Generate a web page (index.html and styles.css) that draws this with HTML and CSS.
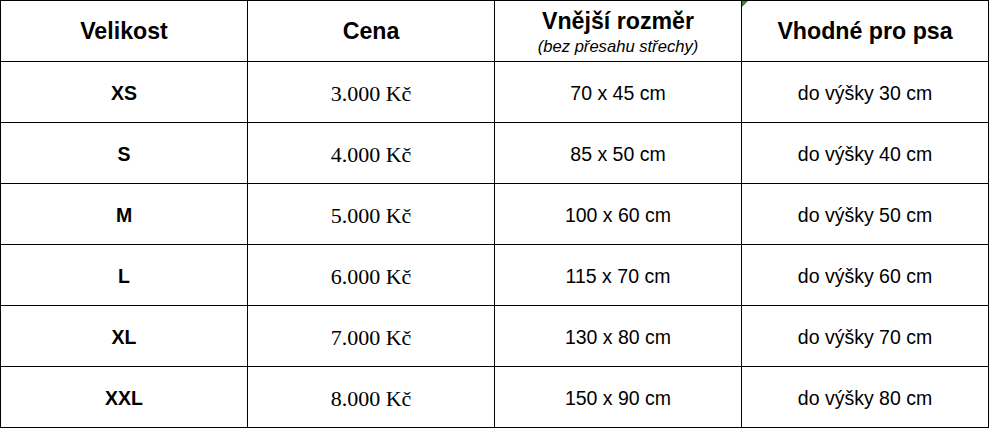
FILE: index.html
```html
<!DOCTYPE html>
<html lang="cs">
<head>
<meta charset="utf-8">
<title>Velikosti</title>
<link rel="stylesheet" href="styles.css">
</head>
<body>
<table class="sizes">
  <colgroup><col><col><col><col></colgroup>
  <thead>
    <tr>
      <th>Velikost</th>
      <th>Cena</th>
      <th class="two-line"><span class="main">Vnější rozměr</span><span class="sub">(bez přesahu střechy)</span></th>
      <th class="flagged"><span class="marker"></span>Vhodné pro psa</th>
    </tr>
  </thead>
  <tbody>
    <tr><td class="size">XS</td><td class="price">3.000 Kč</td><td>70 x 45 cm</td><td>do výšky 30 cm</td></tr>
    <tr><td class="size">S</td><td class="price">4.000 Kč</td><td>85 x 50 cm</td><td>do výšky 40 cm</td></tr>
    <tr><td class="size">M</td><td class="price">5.000 Kč</td><td>100 x 60 cm</td><td>do výšky 50 cm</td></tr>
    <tr><td class="size">L</td><td class="price">6.000 Kč</td><td>115 x 70 cm</td><td>do výšky 60 cm</td></tr>
    <tr><td class="size">XL</td><td class="price">7.000 Kč</td><td>130 x 80 cm</td><td>do výšky 70 cm</td></tr>
    <tr><td class="size">XXL</td><td class="price">8.000 Kč</td><td>150 x 90 cm</td><td>do výšky 80 cm</td></tr>
  </tbody>
</table>
</body>
</html>
```

FILE: styles.css
```css
html, body {
  margin: 0;
  padding: 0;
  background: #ffffff;
}

body {
  font-family: "Liberation Sans", Arial, sans-serif;
  color: #000000;
}

.sizes {
  table-layout: fixed;
  width: 989px;
  border-collapse: separate;
  border-spacing: 0;
  border-top: 1px solid #000;
  border-left: 1px solid #000;
}

.sizes col {
  width: 247px;
}

.sizes th,
.sizes td {
  box-sizing: border-box;
  height: 61px;
  padding: 0;
  border-right: 1px solid #000;
  border-bottom: 1px solid #000;
  text-align: center;
  vertical-align: middle;
  white-space: nowrap;
}

.sizes th {
  font-size: 23.2px;
  font-weight: bold;
}

.sizes th.two-line {
  vertical-align: top;
  padding-top: 8px;
}

.two-line .main {
  display: block;
  line-height: 24px;
}

.two-line .sub {
  display: block;
  margin-top: 4.5px;
  line-height: 18px;
  font-size: 16.6px;
  font-weight: normal;
  font-style: italic;
}

.flagged {
  position: relative;
}

.marker {
  position: absolute;
  top: 0;
  left: 0;
  width: 0;
  height: 0;
  border-top: 6px solid #2f8a2f;
  border-right: 6px solid transparent;
}

.sizes td {
  font-size: 19.5px;
  padding-top: 2px;
}

.sizes td.size {
  font-weight: bold;
}

.sizes td.price {
  font-family: "Liberation Serif", "Times New Roman", serif;
  font-size: 22px;
  padding-top: 3px;
}
```
